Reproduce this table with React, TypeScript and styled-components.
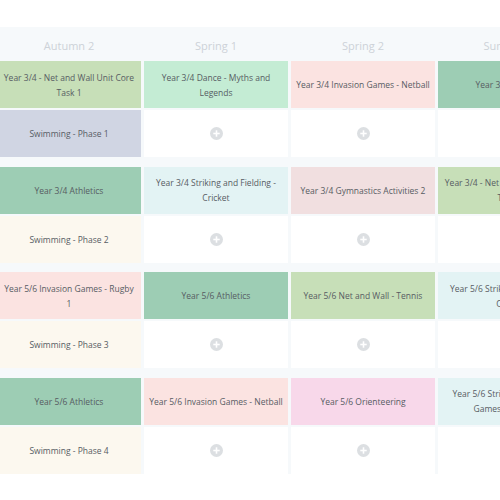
import React from 'react';
import styled, { createGlobalStyle } from 'styled-components';

const GlobalStyle = createGlobalStyle`
  html, body {
    margin: 0;
    padding: 0;
    background: #ffffff;
    overflow: hidden;
  }
  body {
    font-family: 'Open Sans', 'Noto Sans', sans-serif;
  }
`;

const Page = styled.div`
  width: 500px;
  height: 500px;
  overflow: hidden;
  padding-top: 27px;
  box-sizing: border-box;
`;

const Table = styled.div`
  display: flex;
  flex-direction: column;
  width: 585px;
  margin-left: -3px;
  background: #f6f9fb;
`;

const HeaderRow = styled.div`
  display: grid;
  grid-template-columns: repeat(4, 144px);
  column-gap: 3px;
  height: 33px;
`;

const HeaderCell = styled.div`
  display: flex;
  align-items: center;
  justify-content: center;
  font-size: 11px;
  color: #cdd2d8;
  padding-top: 3px;
`;

const Body = styled.div`
  display: flex;
  flex-direction: column;
  gap: 9.5px;
  margin-top: 1px;
`;

const Group = styled.div`
  display: grid;
  grid-template-columns: repeat(4, 144px);
  column-gap: 3px;
  row-gap: 2px;
`;

const Cell = styled.div<{ $bg: string }>`
  height: 47px;
  box-sizing: border-box;
  display: flex;
  align-items: center;
  justify-content: center;
  text-align: center;
  padding: 0 4px;
  background: ${({ $bg }) => $bg};
  color: #575c63;
  font-size: 8.5px;
  line-height: 15px;
`;

const PlusIcon = () => (
  <svg width="13" height="13" viewBox="0 0 13 13">
    <circle cx="6.5" cy="6.5" r="6.5" fill="#dcdfe2" />
    <rect x="3.3" y="5.7" width="6.4" height="1.6" fill="#ffffff" />
    <rect x="5.7" y="3.3" width="1.6" height="6.4" fill="#ffffff" />
  </svg>
);

type Lesson = { text: string; bg: string } | null;

const colors = {
  olive: '#c7dfb8',
  mint: '#c4ecd4',
  pink: '#fbe3e1',
  teal: '#9dcdb4',
  lavender: '#d0d5e3',
  cyan: '#e3f3f4',
  rose: '#f1dfe0',
  cream: '#fcf8ef',
  orchid: '#f8d8ea',
};

const headers = ['Autumn 2', 'Spring 1', 'Spring 2', 'Summer 1'];

const groups: { top: Lesson[]; bottom: Lesson[] }[] = [
  {
    top: [
      { text: 'Year 3/4 - Net and Wall Unit Core Task 1', bg: colors.olive },
      { text: 'Year 3/4 Dance - Myths and Legends', bg: colors.mint },
      { text: 'Year 3/4 Invasion Games - Netball', bg: colors.pink },
      { text: 'Year 3/4 Athletics', bg: colors.teal },
    ],
    bottom: [{ text: 'Swimming - Phase 1', bg: colors.lavender }, null, null, null],
  },
  {
    top: [
      { text: 'Year 3/4 Athletics', bg: colors.teal },
      { text: 'Year 3/4 Striking and Fielding - Cricket', bg: colors.cyan },
      { text: 'Year 3/4 Gymnastics Activities 2', bg: colors.rose },
      { text: 'Year 3/4 - Net and Wall Unit Core Task 2', bg: colors.olive },
    ],
    bottom: [{ text: 'Swimming - Phase 2', bg: colors.cream }, null, null, null],
  },
  {
    top: [
      { text: 'Year 5/6 Invasion Games - Rugby 1', bg: colors.pink },
      { text: 'Year 5/6 Athletics', bg: colors.teal },
      { text: 'Year 5/6 Net and Wall - Tennis', bg: colors.olive },
      { text: 'Year 5/6 Striking and Fielding - Cricket', bg: colors.cyan },
    ],
    bottom: [{ text: 'Swimming - Phase 3', bg: colors.cream }, null, null, null],
  },
  {
    top: [
      { text: 'Year 5/6 Athletics', bg: colors.teal },
      { text: 'Year 5/6 Invasion Games - Netball', bg: colors.pink },
      { text: 'Year 5/6 Orienteering', bg: colors.orchid },
      { text: 'Year 5/6 Striking and Fielding Games - Rounders', bg: colors.cyan },
    ],
    bottom: [{ text: 'Swimming - Phase 4', bg: colors.cream }, null, null, null],
  },
];

const renderCell = (lesson: Lesson, key: string) =>
  lesson ? (
    <Cell key={key} $bg={lesson.bg}>{lesson.text}</Cell>
  ) : (
    <Cell key={key} $bg="#ffffff"><PlusIcon /></Cell>
  );

export default function App() {
  return (
    <Page>
      <GlobalStyle />
      <Table>
        <HeaderRow>
          {headers.map((h) => (
            <HeaderCell key={h}>{h}</HeaderCell>
          ))}
        </HeaderRow>
        <Body>
          {groups.map((g, gi) => (
            <Group key={gi}>
              {g.top.map((l, i) => renderCell(l, `t${i}`))}
              {g.bottom.map((l, i) => renderCell(l, `b${i}`))}
            </Group>
          ))}
        </Body>
      </Table>
    </Page>
  );
}
